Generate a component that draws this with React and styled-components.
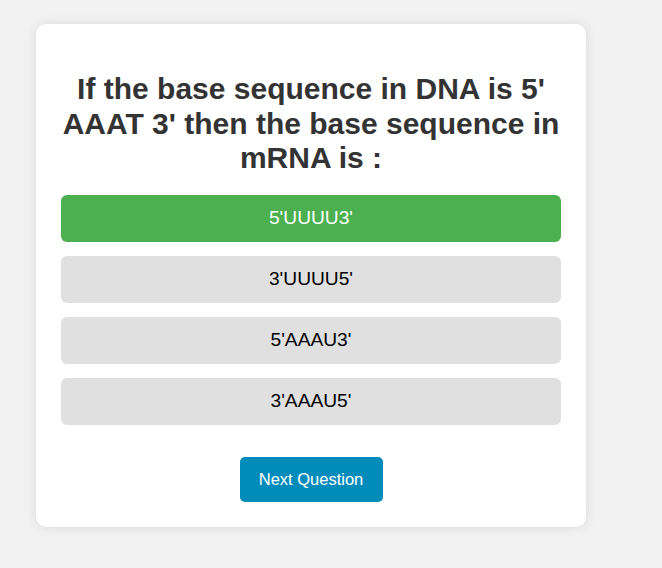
import React, { useState } from "react";
import styled, { createGlobalStyle } from "styled-components";

const GlobalStyle = createGlobalStyle`
  html, body {
    margin: 0;
    background: #f2f2f2;
    font-family: "Liberation Sans", Arial, sans-serif;
  }
  body {
    padding: 24px 0 0 36px;
    min-height: 568px;
    box-sizing: border-box;
  }
`

const Card = styled.div`
  width: 550px;
  box-sizing: border-box;
  padding: 25px;
  background: #fff;
  border-radius: 10px;
  box-shadow: 0 0 12px rgba(0, 0, 0, 0.1);
  display: flex;
  flex-direction: column;
  align-items: center;
`

const Question = styled.h2`
  margin: 23px 0 19px;
  font-size: 30px;
  font-weight: bold;
  color: #333;
  text-align: center;
  line-height: 34.5px;
`

const OptionList = styled.div`
  display: flex;
  flex-direction: column;
  gap: 13.5px;
  width: 100%;
`

const Option = styled.button`
  height: 47.5px;
  width: 100%;
  border: none;
  border-radius: 6px;
  background: ${props => props.correct ? "#4caf50" : "#e0e0e0"};
  color: ${props => props.correct ? "#fff" : "#000"};
  font-family: inherit;
  font-size: 19.2px;
  cursor: pointer;
`

const NextButton = styled.button`
  margin-top: 32px;
  width: 143px;
  height: 45px;
  border: none;
  border-radius: 5px;
  background: #008cba;
  color: #fff;
  font-family: inherit;
  font-size: 16.5px;
  cursor: pointer;
`

const options = ["5'UUUU3'", "3'UUUU5'", "5'AAAU3'", "3'AAAU5'"]

export default function App() {
  const [picked] = useState(0)
  return (
    <>
      <GlobalStyle />
      <Card>
        <Question>If the base sequence in DNA is 5' AAAT 3' then the base sequence in mRNA is :</Question>
        <OptionList>
          {options.map((opt, i) => (
            <Option key={i} correct={i === picked}>{opt}</Option>
          ))}
        </OptionList>
        <NextButton>Next Question</NextButton>
      </Card>
    </>
  )
}
